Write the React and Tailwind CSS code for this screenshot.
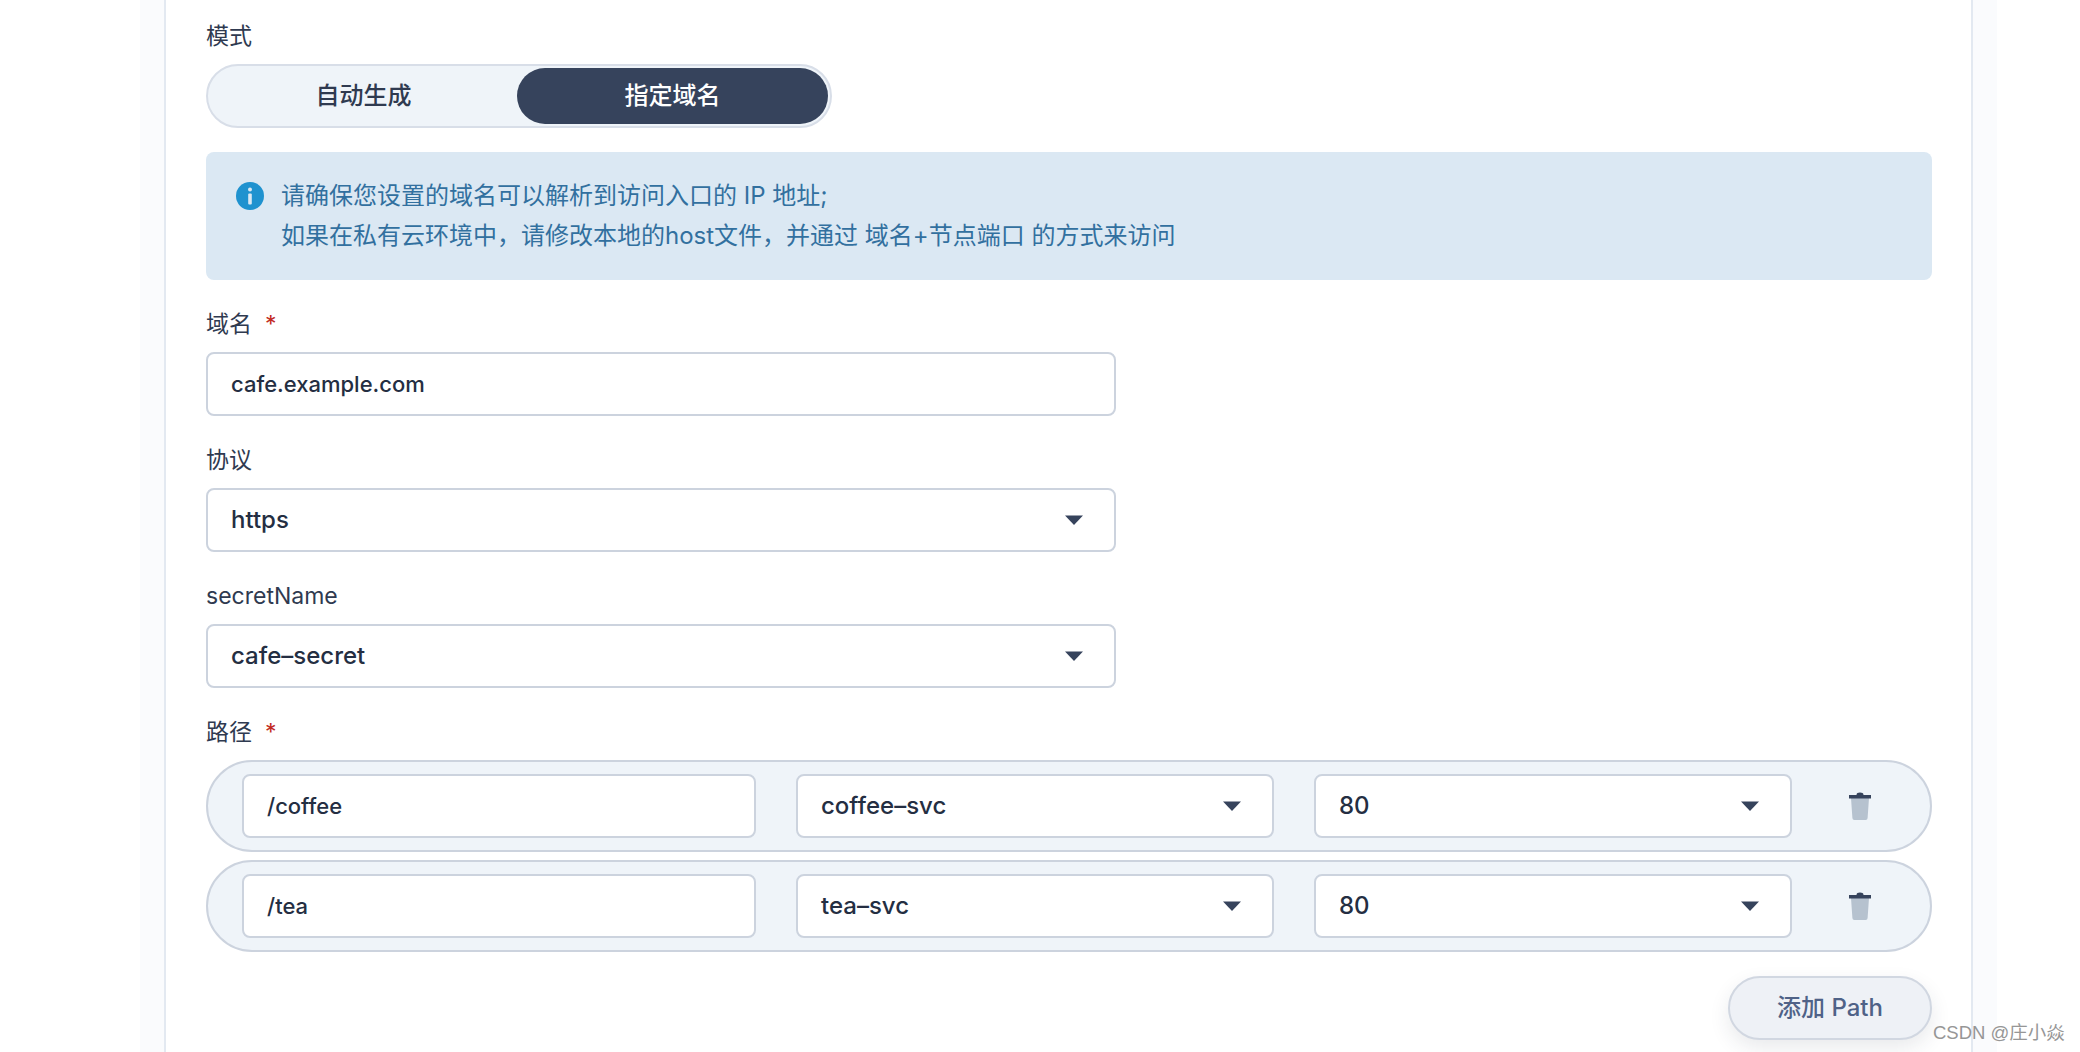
const CaretDown = () => (
  <svg width="18" height="10" viewBox="0 0 18 10" className="shrink-0">
    <path d="M0 0.5h18L9 10z" fill="#36435c" />
  </svg>
);

const TrashIcon = () => (
  <svg width="24" height="30" viewBox="0 0 24 30">
    <path d="M3 7h18l-1.4 20a2 2 0 0 1-2 2H6.4a2 2 0 0 1-2-2z" fill="#b6c2cf" />
    <path d="M1 4h22v3.5H1z" fill="#36435c" />
    <path d="M8.5 4c0-1.6 1.4-2.4 3.5-2.4s3.5.8 3.5 2.4z" fill="#36435c" />
  </svg>
);

const InfoIcon = () => (
  <svg width="28" height="28" viewBox="0 0 28 28" className="shrink-0">
    <circle cx="14" cy="14" r="14" fill="#1f92cf" />
    <circle cx="14" cy="7.6" r="2" fill="#dbe8f3" />
    <rect x="12.2" y="11.5" width="3.6" height="11" rx="1" fill="#dbe8f3" />
  </svg>
);

const Label = ({ children, required }) => (
  <div className="h-6 pt-[2px] leading-6 text-[23px] text-[#2f3a50] flex items-center">
    <span>{children}</span>
    {required && <span className="ml-[13px] text-[#c22a22]">*</span>}
  </div>
);

const TextBox = ({ value, className }) => (
  <div className={`h-16 shrink-0 rounded-lg border-2 border-[#ccd3de] bg-white pl-[23px] flex items-center text-[22px] font-medium text-[#242e42] ${className}`}>
    {value}
  </div>
);

const SelectBox = ({ value, className }) => (
  <div className={`h-16 shrink-0 rounded-lg border-2 border-[#ccd3de] bg-white pl-[23px] pr-[31px] flex items-center justify-between text-[24px] font-medium text-[#242e42] ${className}`}>
    <span>{value}</span>
    <CaretDown />
  </div>
);

const PathRow = ({ path, service }) => (
  <div className="h-[92px] rounded-full border-2 border-[#ccd3de] bg-[#eff4f9] pl-[34px] flex items-center">
    <TextBox value={path} className="w-[514px]" />
    <SelectBox value={service} className="w-[478px] ml-[40px]" />
    <SelectBox value="80" className="w-[478px] ml-[40px]" />
    <div className="ml-[56px]">
      <TrashIcon />
    </div>
  </div>
);

export default function App() {
  return (
    <div className="relative h-[1052px] overflow-hidden bg-white font-['Inter','Noto_Sans_CJK_SC',sans-serif]">
      <div className="ml-[140px] w-[1857px] h-full bg-[#fafbfd] px-6">
        <div className="h-full bg-white border-x-2 border-[#e3e9f1] pl-[40px] pr-[39px] pt-[23px]">
          <Label>模式</Label>

          <div className="mt-[17px] w-[626px] h-16 rounded-full border-2 border-[#d8dee8] bg-[#eff4f9] p-[2px] flex items-center text-[24px] font-medium">
            <div className="flex-1 text-center text-[#2f3a50]">自动生成</div>
            <div className="w-[311px] h-14 rounded-full bg-[#36435c] text-white flex items-center justify-center">指定域名</div>
          </div>

          <div className="mt-[24px] h-[128px] rounded-lg bg-[#dbe8f3] pl-[30px] pt-[24px] flex gap-[17px] text-[24px] leading-[40px] text-[#32709f]">
            <div className="pt-[6px]">
              <InfoIcon />
            </div>
            <div>
              <div>请确保您设置的域名可以解析到访问入口的 IP 地址;</div>
              <div>如果在私有云环境中，请修改本地的host文件，并通过 域名+节点端口 的方式来访问</div>
            </div>
          </div>

          <div className="mt-[31px]">
            <Label required>域名</Label>
          </div>
          <TextBox value="cafe.example.com" className="mt-[17px] w-[910px]" />

          <div className="mt-[31px]">
            <Label>协议</Label>
          </div>
          <SelectBox value="https" className="mt-[17px] w-[910px]" />

          <div className="mt-[31px]">
            <Label>secretName</Label>
          </div>
          <SelectBox value="cafe–secret" className="mt-[17px] w-[910px]" />

          <div className="mt-[31px]">
            <Label required>路径</Label>
          </div>
          <div className="mt-[17px] flex flex-col gap-2">
            <PathRow path="/coffee" service="coffee–svc" />
            <PathRow path="/tea" service="tea–svc" />
          </div>

          <div className="mt-6 flex justify-end">
            <button className="w-[204px] h-16 rounded-full border-2 border-[#d1d7e1] bg-[#eef1f6] text-[24px] font-medium text-[#4f6287] shadow-[0_8px_20px_rgba(36,46,66,0.1)]">
              添加 Path
            </button>
          </div>
        </div>
      </div>

      {/* watermark */}
      <div className="absolute left-[1933px] top-[1021px] text-[18.5px] leading-6 text-[#969696] font-['Liberation_Sans','Noto_Sans_CJK_SC',sans-serif]">
        CSDN @庄小焱
      </div>
    </div>
  );
}
